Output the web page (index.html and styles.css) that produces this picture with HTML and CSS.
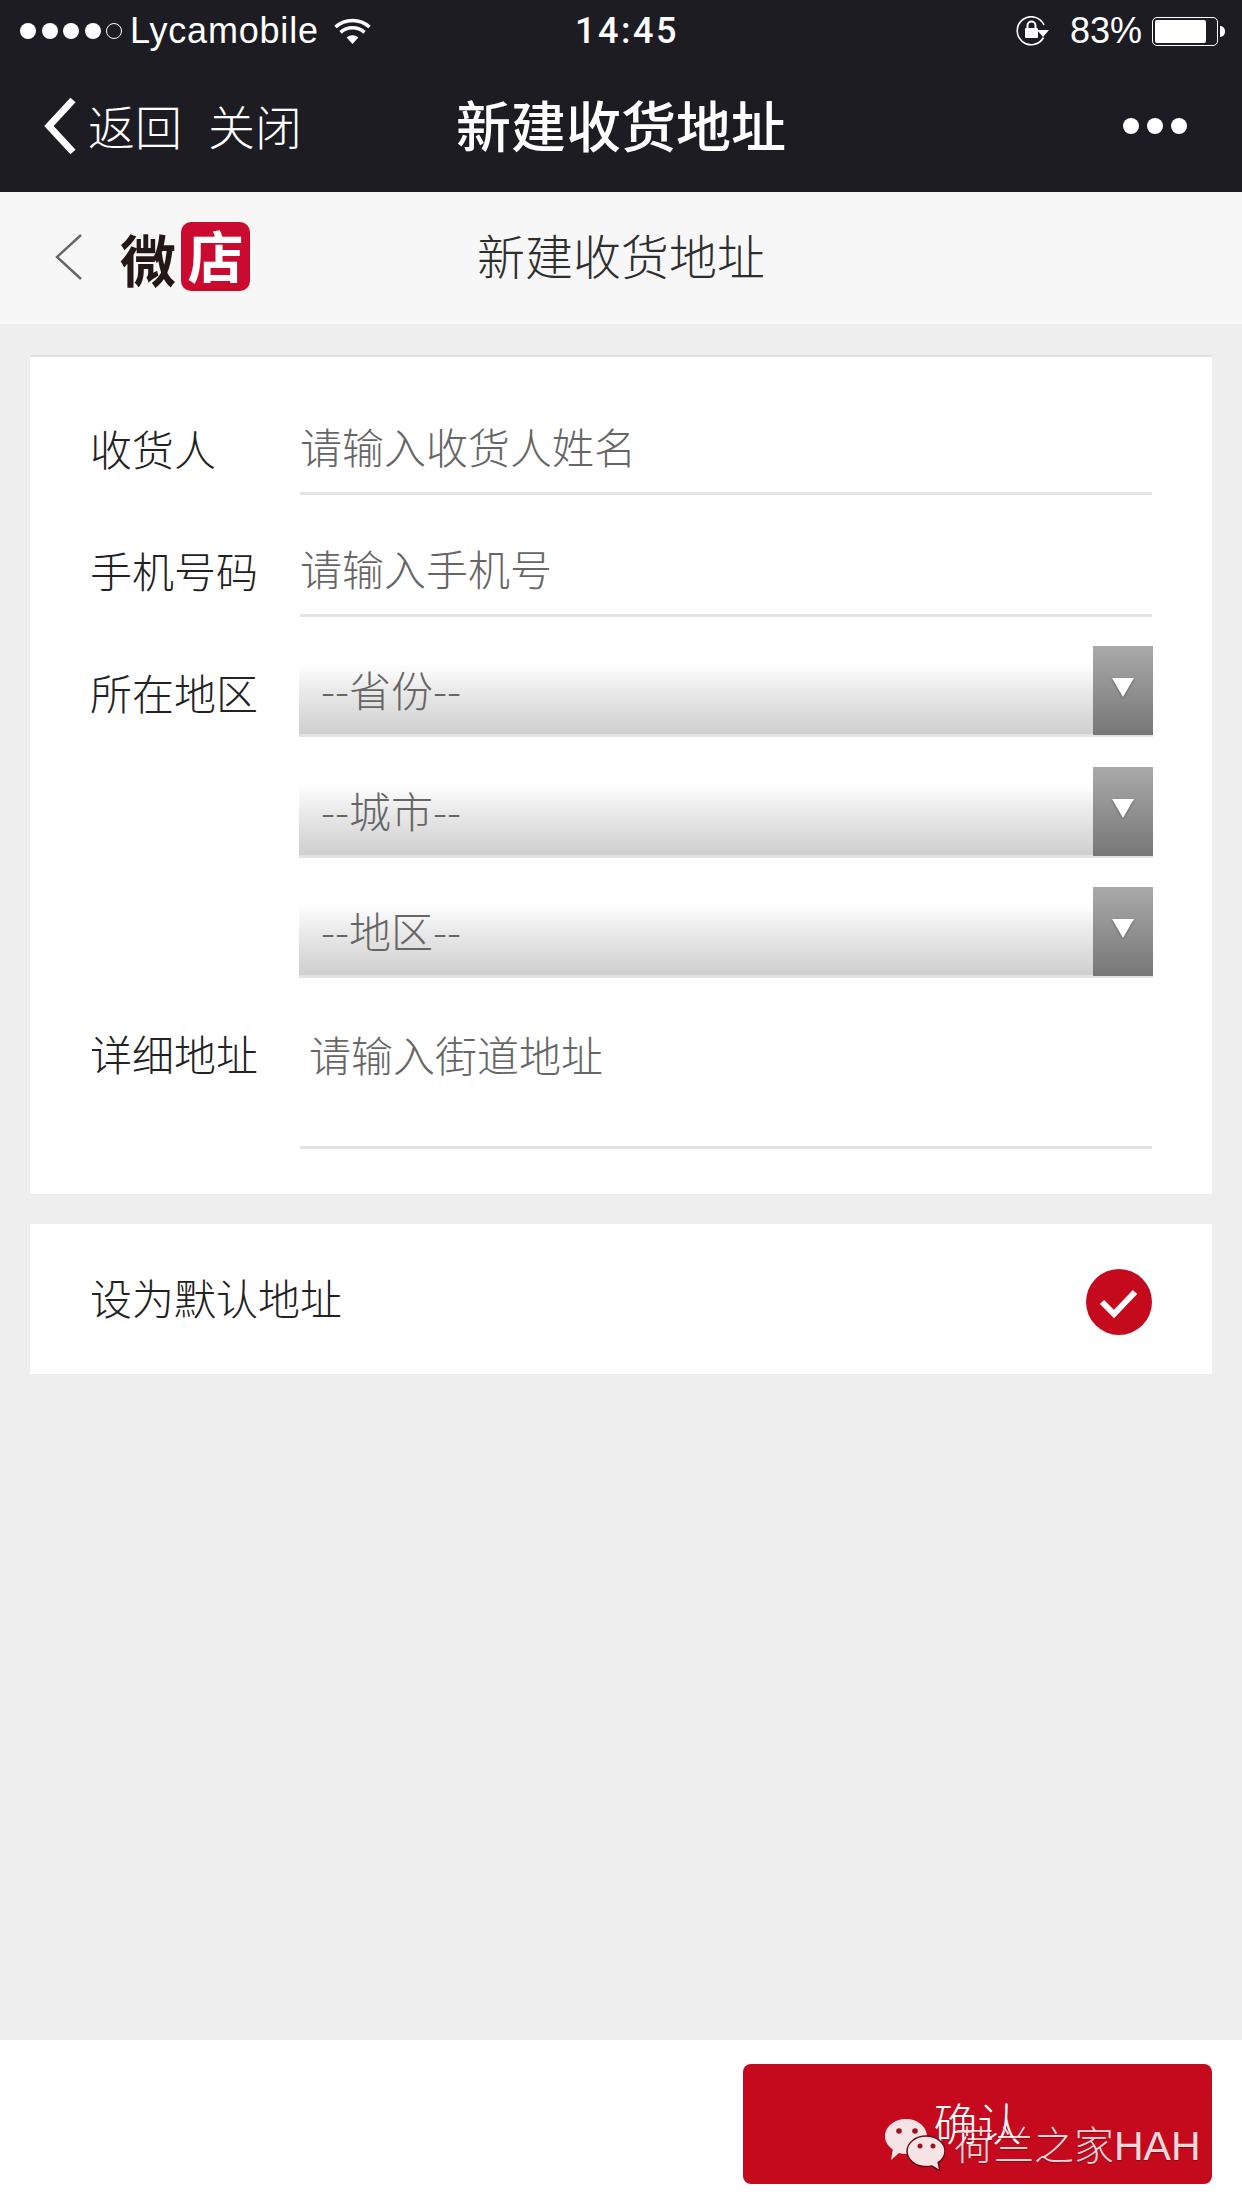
FILE: index.html
```html
<!DOCTYPE html>
<html lang="zh-CN">
<head>
<meta charset="utf-8">
<title>新建收货地址</title>
<link rel="stylesheet" href="styles.css">
</head>
<body>
<div class="page">
  <header class="top">
    <div class="status">
      <div class="status-left">
        <span class="signal"><i></i><i></i><i></i><i></i><i class="off"></i></span>
        <span class="carrier">Lycamobile</span>
        <svg class="wifi" viewBox="0 0 37 26" width="37" height="26"><path d="M18.5 26 12.6 19.4a9 9 0 0 1 11.8 0Z" fill="#fff"/><path d="M1.5 9a25.5 25.5 0 0 1 34 0M6.5 14.4a18 18 0 0 1 24 0" fill="none" stroke="#fff" stroke-width="3.6"/></svg>
      </div>
      <div class="time">14:45</div>
      <div class="status-right">
        <svg class="lock" viewBox="0 0 34 30" width="34" height="30"><path d="M27.5 21.5A14 14 0 1 1 28 9" fill="none" stroke="#fff" stroke-width="1.6"/><path d="M27 21 L33 14 H21Z" fill="#fff"/><rect x="9" y="12" width="13" height="10" rx="1" fill="#fff"/><path d="M11.5 12V9.5a4 4 0 0 1 8 0V12" fill="none" stroke="#fff" stroke-width="2"/></svg>
        <span class="pct">83%</span>
        <span class="battery"><span class="battery-fill"></span></span>
        <span class="battery-nub"></span>
      </div>
    </div>
    <nav class="nav">
      <div class="nav-left">
        <svg class="nav-back" viewBox="0 0 34 58" width="34" height="58"><path d="M30 3 6 29l24 26" fill="none" stroke="#fff" stroke-width="7"/></svg>
        <span class="nav-link">返回</span>
        <span class="nav-link">关闭</span>
      </div>
      <div class="nav-title">新建收货地址</div>
      <div class="nav-right"><span class="more"><i></i><i></i><i></i></span></div>
    </nav>
  </header>

  <div class="subhead">
    <div class="sub-left">
      <svg class="sub-back" viewBox="0 0 27 46" width="27" height="46"><path d="M26 1 2 23l24 22" fill="none" stroke="#666" stroke-width="2.4"/></svg>
      <span class="logo-word">微</span>
      <span class="logo-badge">店</span>
    </div>
    <div class="sub-title">新建收货地址</div>
    <div class="sub-right"></div>
  </div>

  <main class="main">
    <section class="card form">
      <div class="row">
        <div class="label">收货人</div>
        <div class="field">请输入收货人姓名</div>
      </div>
      <div class="row">
        <div class="label">手机号码</div>
        <div class="field">请输入手机号</div>
      </div>
      <div class="row region">
        <div class="label">所在地区</div>
        <div class="selects">
          <div class="select"><span class="select-text">--省份--</span><span class="select-arrow"><i></i></span></div>
          <div class="select"><span class="select-text">--城市--</span><span class="select-arrow"><i></i></span></div>
          <div class="select"><span class="select-text">--地区--</span><span class="select-arrow"><i></i></span></div>
        </div>
      </div>
      <div class="row">
        <div class="label">详细地址</div>
        <div class="field area">请输入街道地址</div>
      </div>
    </section>

    <section class="card default">
      <div class="default-label">设为默认地址</div>
      <svg class="check" viewBox="0 0 66 66" width="66" height="66"><circle cx="33" cy="33" r="33" fill="#c60a1e"/><path d="M16 33l12 12 21-22" fill="none" stroke="#fff" stroke-width="6"/></svg>
    </section>
  </main>

  <footer class="footer">
    <div class="confirm">确认</div>
    <div class="watermark">
      <svg class="wechat" viewBox="0 0 60 52" width="60" height="52">
        <path d="M21 0c11.600 0 21 7.700 21 17.500 0 9.700-9.400 17.500-21 17.500-2.500 0-4.900-.4-7-1L6 41l1.800-10.500C3 27.300 0 22.700 0 17.500 0 7.700 9.400 0 21 0Z" fill="#f6e3e5"/>
        <circle cx="14" cy="12" r="2.800" fill="#a0101f"/><circle cx="30" cy="12" r="2.800" fill="#a0101f"/>
        <path d="M41 17c10.500 0 19 6.600 19 15 0 4.700-2.600 8.800-6.800 11.500L55 52l-8-5c-1.900.4-3.900.6-6 .6-10.500 0-19-6.900-19-15.300S30.500 17 41 17Z" fill="#f6e3e5" stroke="#6d0a14" stroke-width="1.500"/>
        <circle cx="35" cy="27" r="2.500" fill="#a0101f"/><circle cx="48" cy="27" r="2.500" fill="#a0101f"/>
      </svg>
      <span class="wm-text">荷兰之家<span class="wm-latin">HAH</span></span>
    </div>
  </footer>
</div>
</body>
</html>
```
FILE: styles.css
```css
* { box-sizing: border-box; }
html, body { margin: 0; padding: 0; }
body {
  width: 1242px;
  height: 2208px;
  overflow: hidden;
  background: #eeeeee;
  font-family: "Noto Sans CJK SC", "Liberation Sans", sans-serif;
}
i { display: block; }
.page { display: flex; flex-direction: column; height: 2208px; }

/* dark top bar */
.top { background: #1c1c22; color: #fff; height: 192px; flex: none; }
.status {
  height: 60px;
  display: grid;
  grid-template-columns: 572px 110px 1fr;
  align-items: center;
  font-family: "Liberation Sans", sans-serif;
  font-size: 36px;
}
.status-left { display: flex; align-items: center; padding-left: 20px; }
.signal { display: flex; gap: 5.500px; width: 110px; flex: none; }
.signal i { width: 16px; height: 16px; border-radius: 50%; background: #fff; }
.signal i.off { background: none; border: 1px solid #fff; }
.carrier { letter-spacing: .8px; line-height: 62px; }
.wifi { margin-left: 15px; }
.time { font-family: Roboto, "Liberation Sans", sans-serif; font-weight: 500; letter-spacing: 2.500px; text-align: center; line-height: 62px; }
.status-right { display: flex; align-items: center; justify-content: flex-end; padding-right: 17px; }
.pct { margin-left: 20px; width: 72px; line-height: 62px; flex: none; }
.battery { margin-left: 10px; width: 66px; height: 29px; border: 1.500px solid #fff; border-radius: 5px; padding: 2px; flex: none; }
.battery-fill { display: block; width: 51px; height: 100%; background: #fff; border-radius: 2px; }
.battery-nub { width: 5px; height: 11px; background: #fff; border-radius: 0 6px 6px 0; margin-left: 2px; }

.nav {
  height: 132px;
  display: grid;
  grid-template-columns: 1fr auto 1fr;
  align-items: center;
}
.nav-left { display: flex; align-items: center; padding-left: 43px; }
.nav-back { margin-right: 11px; }
.nav-link { font-size: 47px; line-height: 60px; margin-right: 26px; margin-bottom: 2px; font-weight: 300; }
.nav-title { font-size: 55px; font-weight: 500; line-height: 64px; margin-bottom: 6px; }
.nav-right { display: flex; justify-content: flex-end; padding-right: 55px; }
.more { display: flex; gap: 8px; }
.more i { width: 16px; height: 16px; border-radius: 50%; background: #fff; }

/* sub header */
.subhead {
  height: 132px;
  flex: none;
  background: #f7f7f7;
  display: grid;
  grid-template-columns: 1fr auto 1fr;
  align-items: center;
}
.sub-left { display: flex; align-items: center; padding-left: 55px; }
.sub-back { flex: none; margin-top: -3px; }
.logo-word { font-size: 56px; font-weight: 700; color: #231815; line-height: 66px; margin-left: 38px; }
.logo-badge {
  width: 69px;
  height: 69px;
  margin-left: 5px;
  margin-bottom: 3px;
  border-radius: 10px;
  background: #cb0a2f;
  color: #fff;
  font-size: 56px;
  font-weight: 700;
  line-height: 64px;
  text-align: center;
}
.sub-title { font-size: 48px; color: #2e2e2e; line-height: 56px; font-weight: 300; margin-bottom: 8px; }

/* main */
.main { flex: 1; padding: 31px 30px 0; display: flex; flex-direction: column; gap: 30px; }
.card { background: #fff; }
.form {
  border-top: 2px solid #e2e2e2;
  padding: 45px 60px 45px 60px;
  display: flex;
  flex-direction: column;
  gap: 29px;
}
.row { display: flex; align-items: flex-start; }
.label { width: 210px; height: 93px; flex: none; font-size: 42px; line-height: 92px; color: #222; font-weight: 300; }
.field {
  flex: 1;
  height: 93px;
  font-size: 42px;
  line-height: 87px;
  color: #666;
  border-bottom: 3px solid #e3e3e3;
  font-weight: 300;
}
.field.area { height: 142px; line-height: 93px; padding-left: 9px; }

.selects { flex: 1; display: flex; flex-direction: column; gap: 29.500px; margin-left: -1px; margin-right: -1px; }
.select {
  height: 91px;
  display: flex;
  justify-content: space-between;
  border-bottom: 3px solid #e3e3e3;
  background: linear-gradient(#ffffff 20%, #e9e9e9 52%, #cfcfcf 100%);
}
.select-text { font-size: 42px; line-height: 85px; color: #666; padding-left: 22px; font-weight: 300; }
.select-arrow {
  width: 60px;
  height: 89px;
  display: flex;
  justify-content: center;
  padding-top: 32px;
  background: linear-gradient(#a9a9a9, #777777);
}
.select-arrow i {
  width: 0;
  height: 0;
  border-left: 11px solid transparent;
  border-right: 11px solid transparent;
  border-top: 19px solid #fff;
  filter: drop-shadow(0 1px 1px rgba(0,0,0,.35));
}

.default {
  height: 150px;
  padding: 0 60px;
  display: flex;
  align-items: center;
  justify-content: space-between;
}
.default-label { font-size: 42px; color: #222; line-height: 60px; margin-bottom: 4px; font-weight: 300; }
.check { margin-top: 6px; }

/* footer */
.footer {
  position: relative;
  height: 168px;
  flex: none;
  background: #fff;
  padding: 24px 30px 24px 743px;
}
.confirm {
  height: 120px;
  border-radius: 8px;
  background: #c60a1e;
  color: #fff;
  font-size: 44px;
  line-height: 116px;
  text-align: center;
  font-weight: 300;
}
.watermark {
  position: absolute;
  left: 885px;
  top: 79px;
  display: flex;
  align-items: flex-start;
  color: rgba(255,255,255,.86);
  font-size: 40px;
  white-space: nowrap;
}
.wechat { flex: none; }
.wm-text { margin-left: 9px; line-height: 48px; text-shadow: 0 1px 1px rgba(90,0,10,.5); font-weight: 300; }
.wm-latin { font-family: "Liberation Sans", sans-serif; font-size: 41px; line-height: 48px; }
```
